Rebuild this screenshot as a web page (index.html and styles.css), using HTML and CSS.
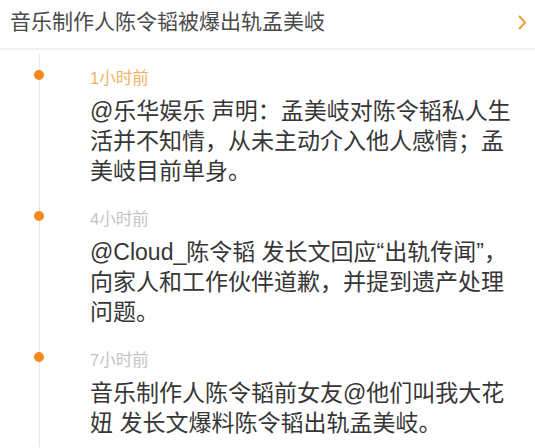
FILE: index.html
```html
<!DOCTYPE html>
<html lang="zh-CN">
<head>
<meta charset="utf-8">
<link rel="stylesheet" href="styles.css">
</head>
<body>
<div class="page">
  <header class="topic">
    <span class="topic-title">音乐制作人陈令韬被爆出轨孟美岐</span>
    <svg class="chevron" width="9" height="15" viewBox="0 0 9 15"><polyline points="1.5,1.5 7,7.5 1.5,13.5" fill="none" stroke="#f0a03c" stroke-width="2" stroke-linecap="round" stroke-linejoin="round"/></svg>
  </header>
  <ul class="timeline">
    <li class="item">
      <div class="rail"><span class="dot"></span></div>
      <div class="content">
        <div class="time time-recent">1小时前</div>
        <p class="text">@乐华娱乐 声明：孟美岐对陈令韬私人生活并不知情，从未主动介入他人感情；孟美岐目前单身。</p>
      </div>
    </li>
    <li class="item">
      <div class="rail"><span class="dot"></span></div>
      <div class="content">
        <div class="time">4小时前</div>
        <p class="text">@Cloud_陈令韬 发长文回应“出轨传闻”，向家人和工作伙伴道歉，并提到遗产处理问题。</p>
      </div>
    </li>
    <li class="item">
      <div class="rail"><span class="dot"></span></div>
      <div class="content">
        <div class="time">7小时前</div>
        <p class="text">音乐制作人陈令韬前女友@他们叫我大花妞 发长文爆料陈令韬出轨孟美岐。</p>
      </div>
    </li>
  </ul>
</div>
</body>
</html>
```
FILE: styles.css
```css
html, body {
  margin: 0;
  padding: 0;
  background: #ffffff;
}
body {
  font-family: "Liberation Sans", "Noto Sans CJK SC", sans-serif;
  overflow: hidden;
}
.page {
  width: 535px;
  height: 448px;
  overflow: hidden;
}
.topic {
  display: flex;
  align-items: center;
  justify-content: space-between;
  height: 48px;
  padding: 0 8px 0 10px;
  border-bottom: 2px solid #f1f1f1;
  box-sizing: content-box;
}
.topic-title {
  font-size: 21px;
  color: #4a4a4a;
  line-height: 28px;
  margin-top: -4px;
}
.chevron {
  margin-top: -4px;
}
.timeline {
  list-style: none;
  margin: 4px 0 0;
  padding: 0;
}
.item {
  display: grid;
  grid-template-columns: 90px 428px;
}
.rail {
  background: linear-gradient(#e8e8e8, #e8e8e8) no-repeat 39px 0 / 1px 100%;
}
.dot {
  display: block;
  width: 10px;
  height: 10px;
  border-radius: 50%;
  background: #f5891f;
  margin: 16px 0 0 34px;
}
.content {
  padding: 12px 0 9px;
}
.time {
  font-size: 16.5px;
  line-height: 24px;
  color: #c4c4c4;
}
.time-recent {
  color: #f2b264;
}
.text {
  margin: 6px 0 0;
  font-size: 23px;
  line-height: 30px;
  color: #363636;
}
```
